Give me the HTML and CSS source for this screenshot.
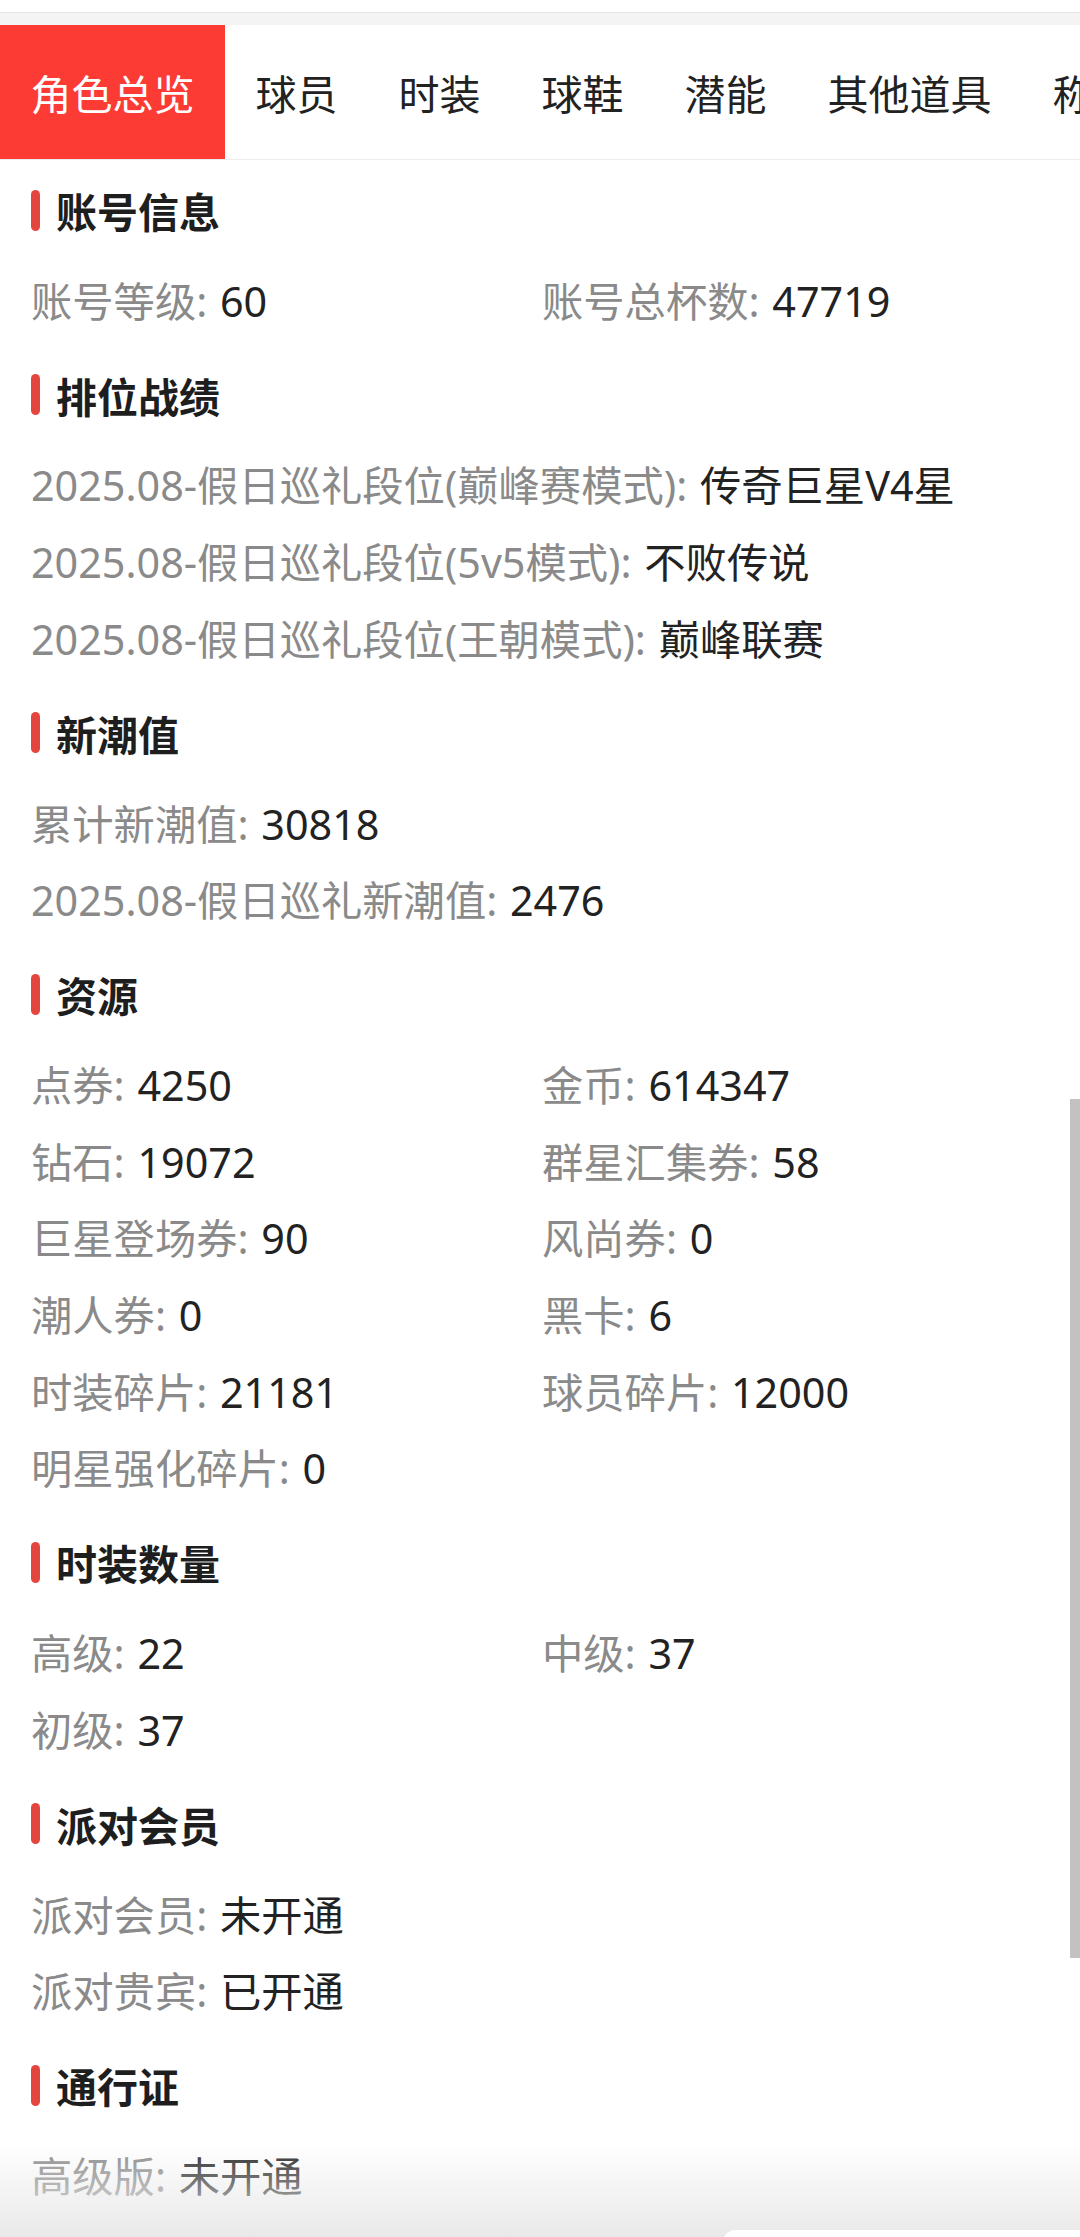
FILE: index.html
```html
<!DOCTYPE html>
<html lang="zh-CN">
<head>
<meta charset="utf-8">
<title>角色总览</title>
<link rel="stylesheet" href="styles.css">
</head>
<body>
<div class="page">
  <div class="statusbar"></div>
  <div class="band"></div>
  <nav class="tabs">
    <div class="tab active">角色总览</div>
    <div class="tab">球员</div>
    <div class="tab">时装</div>
    <div class="tab">球鞋</div>
    <div class="tab">潜能</div>
    <div class="tab">其他道具</div>
    <div class="tab">称号</div>
  </nav>

  <main class="content">
    <section class="sec">
      <h2 class="sec-title">账号信息</h2>
      <div class="grid">
        <div class="item"><span class="k">账号等级: </span><span class="v">60</span></div>
        <div class="item"><span class="k">账号总杯数: </span><span class="v">47719</span></div>
      </div>
    </section>

    <section class="sec">
      <h2 class="sec-title">排位战绩</h2>
      <div class="grid one">
        <div class="item"><span class="k">2025.08-假日巡礼段位(巅峰赛模式): </span><span class="v">传奇巨星V4星</span></div>
        <div class="item"><span class="k">2025.08-假日巡礼段位(5v5模式): </span><span class="v">不败传说</span></div>
        <div class="item"><span class="k">2025.08-假日巡礼段位(王朝模式): </span><span class="v">巅峰联赛</span></div>
      </div>
    </section>

    <section class="sec">
      <h2 class="sec-title">新潮值</h2>
      <div class="grid one">
        <div class="item"><span class="k">累计新潮值: </span><span class="v">30818</span></div>
        <div class="item"><span class="k">2025.08-假日巡礼新潮值: </span><span class="v">2476</span></div>
      </div>
    </section>

    <section class="sec">
      <h2 class="sec-title">资源</h2>
      <div class="grid">
        <div class="item"><span class="k">点券: </span><span class="v">4250</span></div>
        <div class="item"><span class="k">金币: </span><span class="v">614347</span></div>
        <div class="item"><span class="k">钻石: </span><span class="v">19072</span></div>
        <div class="item"><span class="k">群星汇集券: </span><span class="v">58</span></div>
        <div class="item"><span class="k">巨星登场券: </span><span class="v">90</span></div>
        <div class="item"><span class="k">风尚券: </span><span class="v">0</span></div>
        <div class="item"><span class="k">潮人券: </span><span class="v">0</span></div>
        <div class="item"><span class="k">黑卡: </span><span class="v">6</span></div>
        <div class="item"><span class="k">时装碎片: </span><span class="v">21181</span></div>
        <div class="item"><span class="k">球员碎片: </span><span class="v">12000</span></div>
        <div class="item"><span class="k">明星强化碎片: </span><span class="v">0</span></div>
      </div>
    </section>

    <section class="sec">
      <h2 class="sec-title">时装数量</h2>
      <div class="grid">
        <div class="item"><span class="k">高级: </span><span class="v">22</span></div>
        <div class="item"><span class="k">中级: </span><span class="v">37</span></div>
        <div class="item"><span class="k">初级: </span><span class="v">37</span></div>
      </div>
    </section>

    <section class="sec">
      <h2 class="sec-title">派对会员</h2>
      <div class="grid one">
        <div class="item"><span class="k">派对会员: </span><span class="v">未开通</span></div>
        <div class="item"><span class="k">派对贵宾: </span><span class="v">已开通</span></div>
      </div>
    </section>

    <section class="sec">
      <h2 class="sec-title">通行证</h2>
      <div class="grid one">
        <div class="item"><span class="k">高级版: </span><span class="v">未开通</span></div>
      </div>
    </section>
  </main>

  <div class="scrollbar"></div>
  <div class="bottom-fade"></div>
  <div class="bottom-card"></div>
</div>
</body>
</html>
```

FILE: styles.css
```css
html, body {
  margin: 0;
  padding: 0;
  height: 2237px;
  overflow: hidden;
  background: #ffffff;
}

body {
  font-family: "Noto Sans", "Noto Sans CJK SC", sans-serif;
  color: #222222;
}

.page {
  position: relative;
  width: 1080px;
  height: 2237px;
  overflow: hidden;
  background: #ffffff;
}

.statusbar {
  height: 12px;
  background: #ffffff;
  border-bottom: 1px solid #e4e4e4;
}

.band {
  height: 12px;
  background: #f4f4f4;
}

.tabs {
  display: flex;
  height: 134px;
  background: #ffffff;
  border-bottom: 1px solid #ececec;
  white-space: nowrap;
  overflow: hidden;
}

.tab {
  flex: 0 0 auto;
  display: flex;
  align-items: center;
  padding: 0 30.5px;
  font-family: "Noto Sans CJK SC", sans-serif;
  font-size: 41px;
  color: #222222;
}

.tab.active {
  background: #fd3b35;
  color: #ffffff;
}

.content {
  padding: 20px 0 0 31px;
}

.sec {
  margin-bottom: 25.6px;
}

.sec-title {
  display: flex;
  align-items: center;
  gap: 16px;
  height: 60px;
  margin: 0 0 22.6px 0;
  font-family: "Noto Sans CJK SC", sans-serif;
  font-size: 41px;
  font-weight: 700;
  color: #1e1e1e;
}

.sec-title::before {
  content: "";
  display: block;
  width: 9px;
  height: 41px;
  border-radius: 5px;
  background: #e5453f;
}

.grid {
  display: grid;
  grid-template-columns: 511px 1fr;
}

.grid.one {
  grid-template-columns: 1fr;
}

.item {
  height: 76.65px;
  line-height: 76.65px;
  font-size: 41.3px;
  white-space: nowrap;
}

.k {
  color: #8a8a8a;
}

.v {
  color: #222222;
  margin-left: 2px;
}

.scrollbar {
  position: absolute;
  left: 1070px;
  top: 1099px;
  width: 10px;
  height: 859px;
  background: #c2c2c2;
}

.bottom-fade {
  position: absolute;
  left: 0;
  right: 0;
  bottom: 0;
  height: 95px;
  background: linear-gradient(to bottom, rgba(236, 236, 236, 0), #e9e9e9);
}

.bottom-card {
  position: absolute;
  left: 722px;
  top: 2230px;
  width: 400px;
  height: 60px;
  border-radius: 14px 0 0 0;
  background: #ffffff;
}
```
